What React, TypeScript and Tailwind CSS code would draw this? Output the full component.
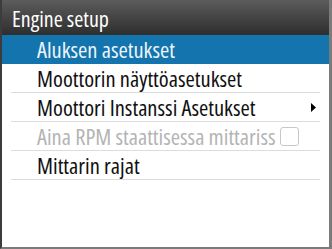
import { ReactNode } from 'react';

function Row({
  children,
  selected,
  disabled,
  right,
}: {
  children: ReactNode;
  selected?: boolean;
  disabled?: boolean;
  right?: ReactNode;
}) {
  return (
    <div className={selected ? 'bg-[#1474ad]' : ''}>
      <div
        className={`mx-[9px] h-[29px] flex items-center border-b ${
          selected ? 'border-transparent' : 'border-[#dcdcdc]'
        }`}
      >
        <span
          className={`pl-[26px] text-[22.5px] font-stretch-condensed leading-[27px] whitespace-nowrap ${
            selected ? 'text-[#eaf4fb]' : disabled ? 'text-[#b4b4b4]' : 'text-[#111]'
          }`}
        >
          {children}
        </span>
        {right}
      </div>
    </div>
  );
}

export default function App() {
  return (
    <div className="w-[332px] h-[249px] bg-white border-l-2 border-l-[#3c3c3c] border-r-[3px] border-r-[#7b7b7b] border-b-2 border-b-[#7b7b7b] flex flex-col overflow-hidden font-['Open_Sans',sans-serif]">
      <div className="h-[35px] shrink-0 bg-gradient-to-b from-[#5c5c5c] to-[#2e2e2e] flex items-center pl-[10px]">
        <span className="text-white text-[22px] font-stretch-condensed leading-[30px]">Engine setup</span>
      </div>
      <Row selected>Aluksen asetukset</Row>
      <Row>Moottorin näyttöasetukset</Row>
      <Row
        right={
          <svg width="5" height="9" viewBox="0 0 5 9" className="ml-auto mr-[4px] shrink-0">
            <path d="M0 0 L5 4.5 L0 9 Z" fill="#000" />
          </svg>
        }
      >
        Moottori Instanssi Asetukset
      </Row>
      <Row
        disabled
        right={
          <div className="w-[19px] h-[19px] ml-[4px] shrink-0 rounded-[3px] border border-[#c8c8c8] bg-white" />
        }
      >
        Aina RPM staattisessa mittariss
      </Row>
      <Row>Mittarin rajat</Row>
    </div>
  );
}
